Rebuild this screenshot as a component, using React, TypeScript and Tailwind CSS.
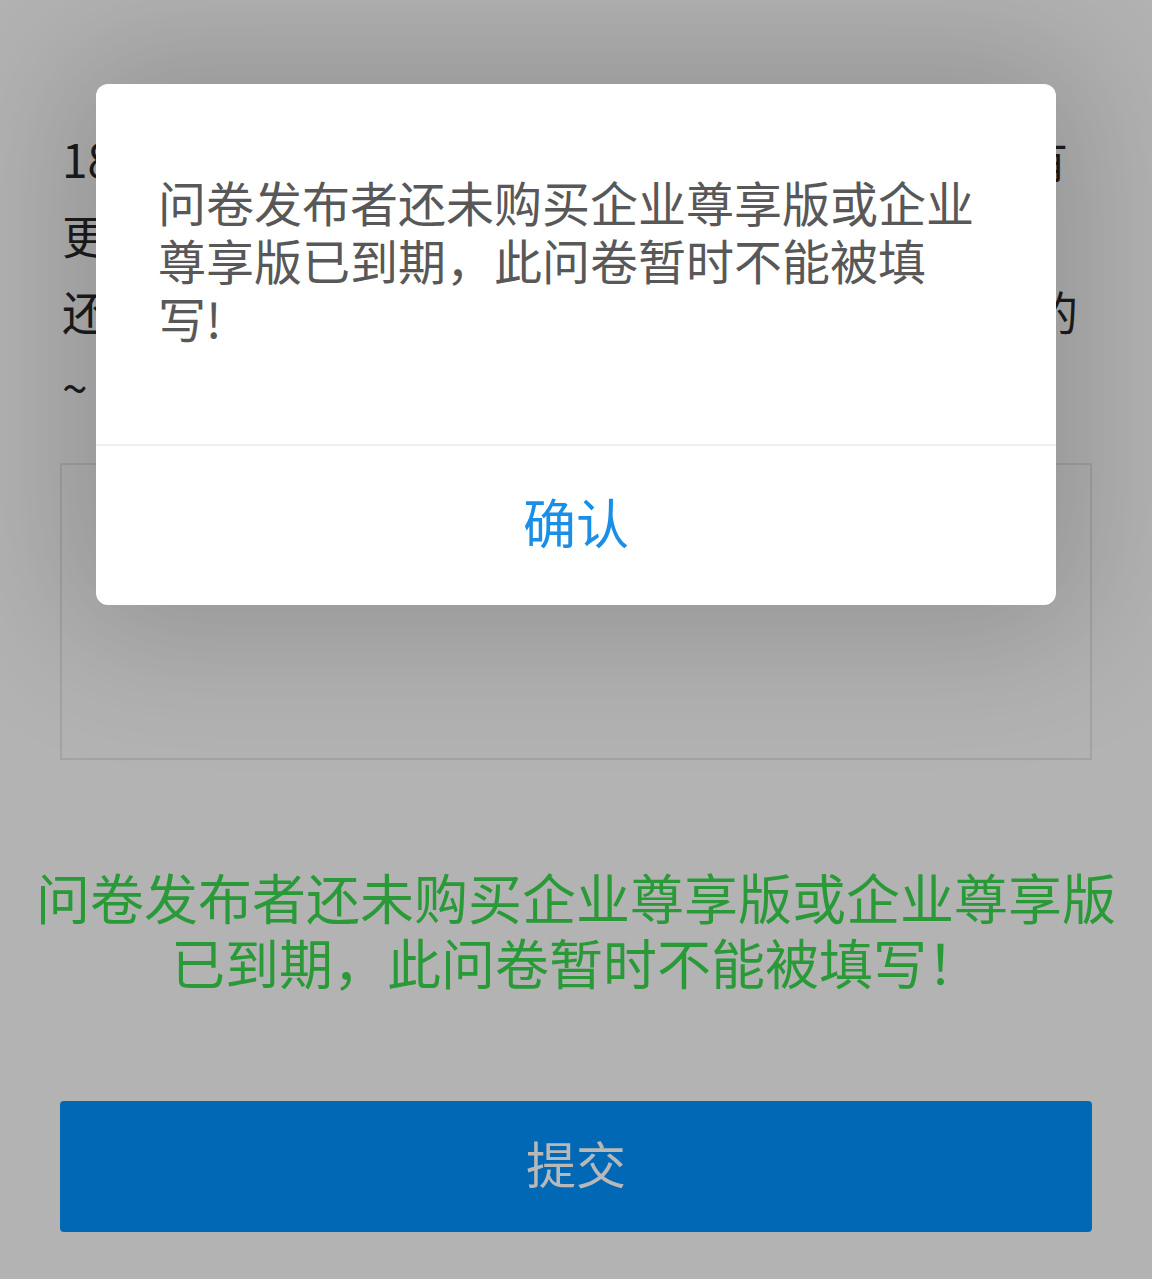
import React from 'react';

const font = { fontFamily: '"Noto Sans CJK SC", "Noto Sans", sans-serif' };

const BackLine: React.FC<{ left: string; right?: string; className?: string }> = ({ left, right, className }) => (
  <div className={`flex justify-between h-[76px] items-center ${className ?? ''}`}>
    <span>{left}</span>
    {right && <span>{right}</span>}
  </div>
);

const App: React.FC = () => {
  return (
    <div className="relative min-h-[1279px] w-full bg-[#b3b3b3] overflow-hidden" style={font}>
      {/* page under the overlay */}
      <div className="px-[60px] pt-[120px]">
        <div className="text-[46px] text-[#1c1c1c] pl-[2px]">
          <BackLine left="18岁以上的用户请填写此问卷，如有" right="有" className="pr-[24px]" />
          <BackLine left="更多问题请留言" />
          <BackLine left="还请认真填写，谢谢您的支持" right="的" className="pr-[14px]" />
          <BackLine left="~" />
        </div>

        <div className="mt-[39px] h-[297px] border-2 border-[#a3a3a3]" />

        <div className="mt-[104px] text-center text-[54px] leading-[65px] text-[#2a9a38] -mx-[40px]">
          <div>问卷发布者还未购买企业尊享版或企业尊享版</div>
          <div>已到期，此问卷暂时不能被填写！</div>
        </div>

        <button className="mt-[107px] w-full h-[131px] rounded-[4px] bg-[#0068b4] pb-[8px] text-[50px] text-[#b8b8b8]">
          提交
        </button>
      </div>

      {/* dialog */}
      <div className="absolute left-[96px] top-[84px] w-[960px] rounded-[12px] bg-white shadow-[0_0_140px_30px_rgba(0,0,0,0.18)]">
        <div className="pl-[62px] pt-[88px] pb-[98px]">
          <div className="w-[822px] text-[48px] leading-[58px] text-[#585858]">
            问卷发布者还未购买企业尊享版或企业尊享版已到期，此问卷暂时不能被填写!
          </div>
        </div>
        <div className="h-[2px] bg-[#efefef]" />
        <div className="h-[159px] flex items-center justify-center pb-[8px] text-[53px] text-[#1b8fe6]">
          确认
        </div>
      </div>
    </div>
  );
};

export default App;
